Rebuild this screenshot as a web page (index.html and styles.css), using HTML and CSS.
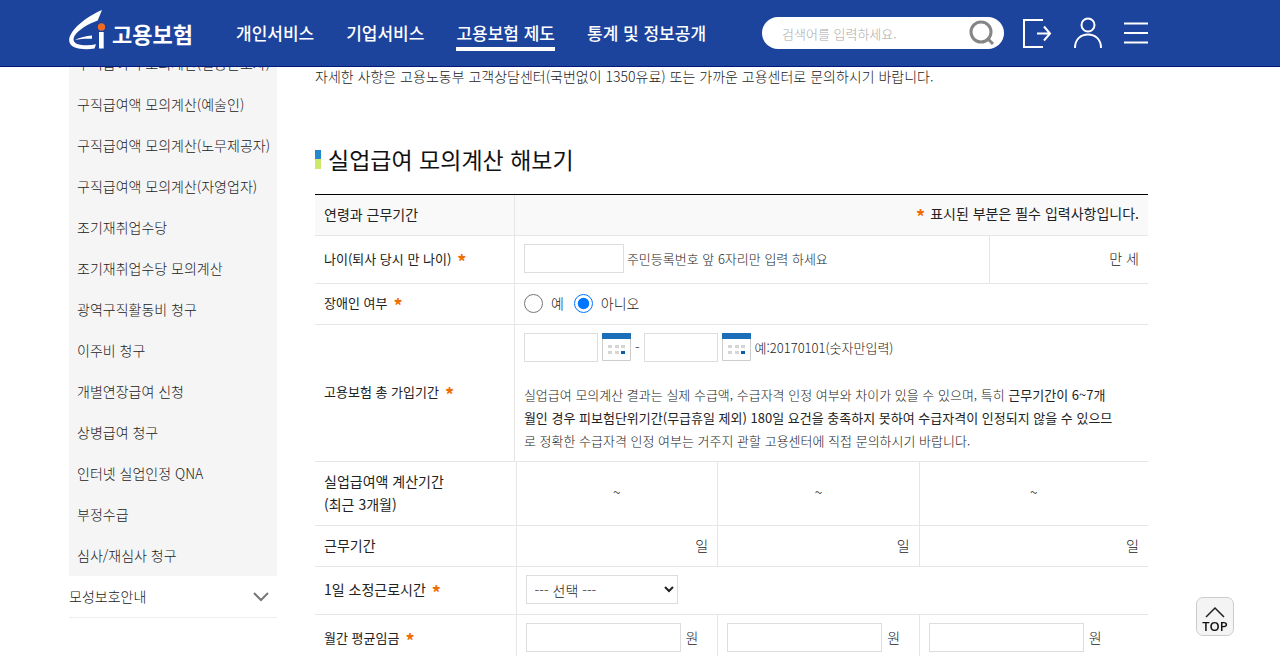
FILE: index.html
```html
<!DOCTYPE html>
<html lang="ko">
<head>
<meta charset="utf-8">
<meta name="viewport" content="width=device-width, initial-scale=1">
<title>고용보험</title>
<link rel="stylesheet" href="styles.css">
</head>
<body>
<header class="header">
  <a class="logo" href="#">
    <svg class="logo-mark" viewBox="0 0 36 40" aria-hidden="true">
      <path fill="#fff" d="M33 0 28.700 10.500C19 14 9 20 5.500 26c-2.500 5 0 8 7 9 5 .6 10 .3 14.500-.8l-1.500 4.300C19 39.600 11 39.500 6 37.500 1.500 35.700 0 33 .2 29 2 19 17 7 33 0Z"/>
      <path fill="#fff" d="M6 29.800C11 27.500 17 26 23 25.500V28.800C17 28.500 11 29 6 29.800ZM30 22H34.700V38.500H30Z"/>
      <circle cx="32.500" cy="17" r="3.700" fill="#f26a21"/>
    </svg>
    <span class="logo-text">고용보험</span>
  </a>
  <nav class="nav">
    <a href="#">개인서비스</a>
    <a href="#">기업서비스</a>
    <a class="current" href="#">고용보험 제도</a>
    <a href="#">통계 및 정보공개</a>
  </nav>
  <form class="search">
    <input type="text" placeholder="검색어를 입력하세요." aria-label="검색어">
    <button type="button" aria-label="검색"><svg viewBox="0 0 26 26"><circle cx="12" cy="12" r="10" fill="none" stroke="#858585" stroke-width="3"/><path d="M18 18l6 6" stroke="#858585" stroke-width="3"/></svg></button>
  </form>
  <div class="tools">
    <button type="button" aria-label="로그인"><svg width="30" height="32" viewBox="0 0 30 32"><path d="M21 3H2v27h19M15 16.500h13M22 9.500l6 7-6 7"/></svg></button>
    <button type="button" aria-label="회원"><svg width="30" height="32" viewBox="0 0 30 32"><circle cx="15" cy="8" r="6.500"/><path d="M2 31C2 22 8 17.500 15 17.500S28 22 28 31"/></svg></button>
    <button type="button" aria-label="전체메뉴"><svg width="24" height="32" viewBox="0 0 24 32"><path d="M0 6.500h24M0 16h24M0 25.500h24"/></svg></button>
  </div>
</header>

<div class="page">
  <aside class="side">
    <ul class="side-list">
      <li><a href="#">구직급여액 모의계산(일용근로자)</a></li>
      <li><a href="#">구직급여액 모의계산(예술인)</a></li>
      <li><a href="#">구직급여액 모의계산(노무제공자)</a></li>
      <li><a href="#">구직급여액 모의계산(자영업자)</a></li>
      <li><a href="#">조기재취업수당</a></li>
      <li><a href="#">조기재취업수당 모의계산</a></li>
      <li><a href="#">광역구직활동비 청구</a></li>
      <li><a href="#">이주비 청구</a></li>
      <li><a href="#">개별연장급여 신청</a></li>
      <li><a href="#">상병급여 청구</a></li>
      <li><a href="#">인터넷 실업인정 QNA</a></li>
      <li><a href="#">부정수급</a></li>
      <li><a href="#">심사/재심사 청구</a></li>
    </ul>
    <a class="side-more" href="#">모성보호안내
      <svg width="16" height="10" viewBox="0 0 16 10"><path d="M1 1l7 7 7-7" fill="none" stroke="#777" stroke-width="2"/></svg>
    </a>
  </aside>

  <main class="main">
    <p class="notice">자세한 사항은 고용노동부 고객상담센터(국번없이 1350유료) 또는 가까운 고용센터로 문의하시기 바랍니다.</p>
    <h2 class="title">실업급여 모의계산 해보기</h2>

    <table class="form-table first">
      <colgroup><col class="c-label"><col class="c-wide"><col class="c-end"></colgroup>
      <tr class="head"><th scope="row">연령과 근무기간</th><td class="right strong" colspan="2"><span class="req lead">*</span>표시된 부분은 필수 입력사항입니다.</td></tr>
      <tr class="tall"><th scope="row" class="small"><label for="age">나이(퇴사 당시 만 나이)</label><span class="req">*</span></th>
        <td class="small"><div class="line"><input class="box age" id="age" type="text"><span>주민등록번호 앞 6자리만 입력 하세요</span></div></td>
        <td class="right">만 세</td></tr>
      <tr><th scope="row" class="small">장애인 여부<span class="req">*</span></th>
        <td colspan="2"><div class="radios"><label><input type="radio" name="disabled">예</label><label><input type="radio" name="disabled" checked>아니오</label></div></td></tr>
      <tr class="period"><th scope="row" class="small">고용보험 총 가입기간<span class="req">*</span></th>
        <td colspan="2">
          <div class="line dates">
            <input class="box date" type="text" aria-label="가입 시작일">
            <button class="cal" type="button" aria-label="시작일 달력"><svg viewBox="0 0 29 28"><path fill="#fff" stroke="#ccc" d="M.5.5h28v27H.5z"/><path fill="#1b6fb9" d="M0 0h29v6H0z"/><path fill="#d5d5d5" d="M6 12h4v3H6zM13 12h4v3h-4zM19 12h4v3h-4zM6 18h4v3H6zM13 18h4v3h-4z"/><path fill="#0c5bab" d="M19 18h4v3h-4z"/></svg></button>
            <span class="dash">-</span>
            <input class="box date" type="text" aria-label="가입 종료일">
            <button class="cal" type="button" aria-label="종료일 달력"><svg viewBox="0 0 29 28"><path fill="#fff" stroke="#ccc" d="M.5.5h28v27H.5z"/><path fill="#1b6fb9" d="M0 0h29v6H0z"/><path fill="#d5d5d5" d="M6 12h4v3H6zM13 12h4v3h-4zM19 12h4v3h-4zM6 18h4v3H6zM13 18h4v3h-4z"/><path fill="#0c5bab" d="M19 18h4v3h-4z"/></svg></button>
            <span class="small">예:20170101(숫자만입력)</span>
          </div>
          <p class="note">실업급여 모의계산 결과는 실제 수급액, 수급자격 인정 여부와 차이가 있을 수 있으며, 특히 <strong>근무기간이 6~7개</strong><br><strong>월인 경우 피보험단위기간(무급휴일 제외) 180일 요건을 충족하지 못하여 수급자격이 인정되지 않을 수 있으므</strong><br>로 정확한 수급자격 인정 여부는 거주지 관할 고용센터에 직접 문의하시기 바랍니다.</p>
        </td></tr>
    </table>

    <table class="form-table">
      <colgroup><col class="c-q"><col class="c-q"><col class="c-q"><col></colgroup>
      <tr class="months"><th scope="row">실업급여액 계산기간<br>(최근 3개월)</th><td class="center">~</td><td class="center">~</td><td class="center">~</td></tr>
      <tr><th scope="row">근무기간</th><td class="right">일</td><td class="right">일</td><td class="right">일</td></tr>
      <tr class="tall"><th scope="row"><label for="hours">1일 소정근로시간</label><span class="req">*</span></th><td colspan="3"><select class="box hours" id="hours"><option>--- 선택 ---</option></select></td></tr>
      <tr class="tall"><th scope="row" class="small">월간 평균임금<span class="req">*</span></th>
        <td><label class="line pay"><input class="box" type="text">원</label></td>
        <td><label class="line pay"><input class="box" type="text">원</label></td>
        <td><label class="line pay"><input class="box" type="text">원</label></td></tr>
    </table>
  </main>
</div>

<button class="top" type="button"><svg width="20" height="12" viewBox="0 0 20 12"><path d="M1 11l9-9 9 9" fill="none" stroke="#222" stroke-width="1.500"/></svg>TOP</button>
</body>
</html>
```
FILE: styles.css
```css
* { box-sizing: border-box; }

body {
  margin: 0;
  height: 100vh;
  overflow: hidden;
  background: #fff;
  color: #222;
  font: 300 14px/23px "Noto Sans CJK KR", sans-serif;
}

a { color: inherit; text-decoration: none; }
p, h2, ul { margin: 0; padding: 0; }
ul { list-style: none; }
input, select, button { font: inherit; color: inherit; }
button { padding: 0; border: 0; background: none; cursor: pointer; }
svg { display: block; }

/* Header */
.header {
  position: fixed;
  inset: 0 0 auto;
  z-index: 2;
  display: flex;
  align-items: center;
  height: 67px;
  padding: 0 132px 0 69px;
  background: #1d449c;
  border-bottom: 1px solid #00197a;
  color: #fff;
}
.logo { display: flex; align-items: center; gap: 7px; width: 167px; }
.logo-mark { width: 36px; height: 40px; margin-bottom: 6px; }
.logo-text { font-size: 22px; font-weight: 700; line-height: 32px; }
.nav { display: flex; gap: 32px; font-size: 17px; font-weight: 500; line-height: 28px; white-space: nowrap; }
.nav a { border-bottom: 4px solid transparent; border-top: 4px solid transparent; }
.nav .current { border-bottom-color: #fff; }
.search {
  display: flex;
  align-items: center;
  width: 242px;
  height: 32px;
  margin-left: auto;
  padding: 0 9px 0 20px;
  border-radius: 16px;
  background: #fff;
}
.search input { flex: 1; min-width: 0; padding: 0; border: 0; outline: 0; background: none; font-size: 13px; color: #444; }
.search input::placeholder { color: #aaa; opacity: 1; }
.search button { width: 26px; height: 26px; }
.tools { display: flex; gap: 21px; margin-left: 18px; }
.tools svg { fill: none; stroke: #fff; stroke-width: 2; }

/* Page */
.page { display: flex; gap: 38px; padding: 43px 132px 0 69px; }
.side { flex: 0 0 208px; font-size: 14px; line-height: 41px; white-space: nowrap; }
.side-list { background: #f5f5f5; }
.side-list a { display: block; padding-left: 8px; }
.side-more {
  display: flex;
  align-items: center;
  justify-content: space-between;
  padding-right: 8px;
  border-bottom: 1px solid #eee;
}
.main { flex: 1; min-width: 0; padding-top: 22px; }
.notice { white-space: nowrap; }
.title {
  display: flex;
  align-items: center;
  gap: 7px;
  margin: 55px 0 18px;
  color: #111;
  font-size: 23px;
  font-weight: 400;
  line-height: 33px;
}
.title::before { content: ""; width: 6px; height: 19px; background: linear-gradient(#2389cd 50%, #cde86b 50%); }

/* Form tables */
.form-table { width: 100%; table-layout: fixed; border-collapse: separate; border-spacing: 0; }
.form-table.first { border-top: 1px solid #000; }
.c-label { width: 24%; }
.c-wide { width: 57%; }
.c-end { width: 19%; }
.c-q { width: 24.2%; }
th, td { height: 41px; padding: 0 9px 2px; border-bottom: 1px solid #e6e6e6; text-align: left; vertical-align: middle; }
th { color: #222; font-weight: 400; }
th, td:not(:last-child) { border-right: 1px solid #e6e6e6; }
.head th, .head td { background: #f9f9f9; }
.tall th, .tall td { height: 48px; }
.months th, .months td { height: 64px; }
.period th, .period td { height: 137px; }
.small { font-size: 13px; }
.right { text-align: right; }
.center { text-align: center; }
.strong { color: #222; font-weight: 400; }
.req { margin-left: 6px; color: #ef6c00; font-size: 18px; font-weight: 700; line-height: 20px; vertical-align: -5px; }
.req.lead { margin: 0 5px 0 0; }
.line { display: flex; align-items: center; gap: 3px; }
.box { height: 29px; padding: 0 8px; border: 1px solid #ddd; border-radius: 0; background: #fff; }
.age { width: 100px; }
.radios, .radios label { display: flex; align-items: center; gap: 8px; }
.radios { gap: 10px; }
.radios input { width: 19px; height: 19px; margin: 0; }
.dates { gap: 4px; }
.date { width: 74px; }
.dates .dash { line-height: 28px; }
.cal { width: 29px; height: 28px; }
.note { margin-top: 21px; font-size: 13px; white-space: nowrap; }
.note strong { font-weight: 400; }
.hours { width: 152px; padding: 0 4px; }
.pay { gap: 5px; }
.pay .box { width: 155px; }

/* Back to top */
.top {
  position: fixed;
  right: 46px;
  bottom: 20px;
  display: flex;
  flex-direction: column;
  align-items: center;
  width: 38px;
  height: 39px;
  padding-top: 8px;
  border: 1px solid #ccc;
  border-radius: 7px;
  background: #f4f4f4;
  color: #111;
  font: 600 13px/16px "Open Sans", sans-serif;
}
```
